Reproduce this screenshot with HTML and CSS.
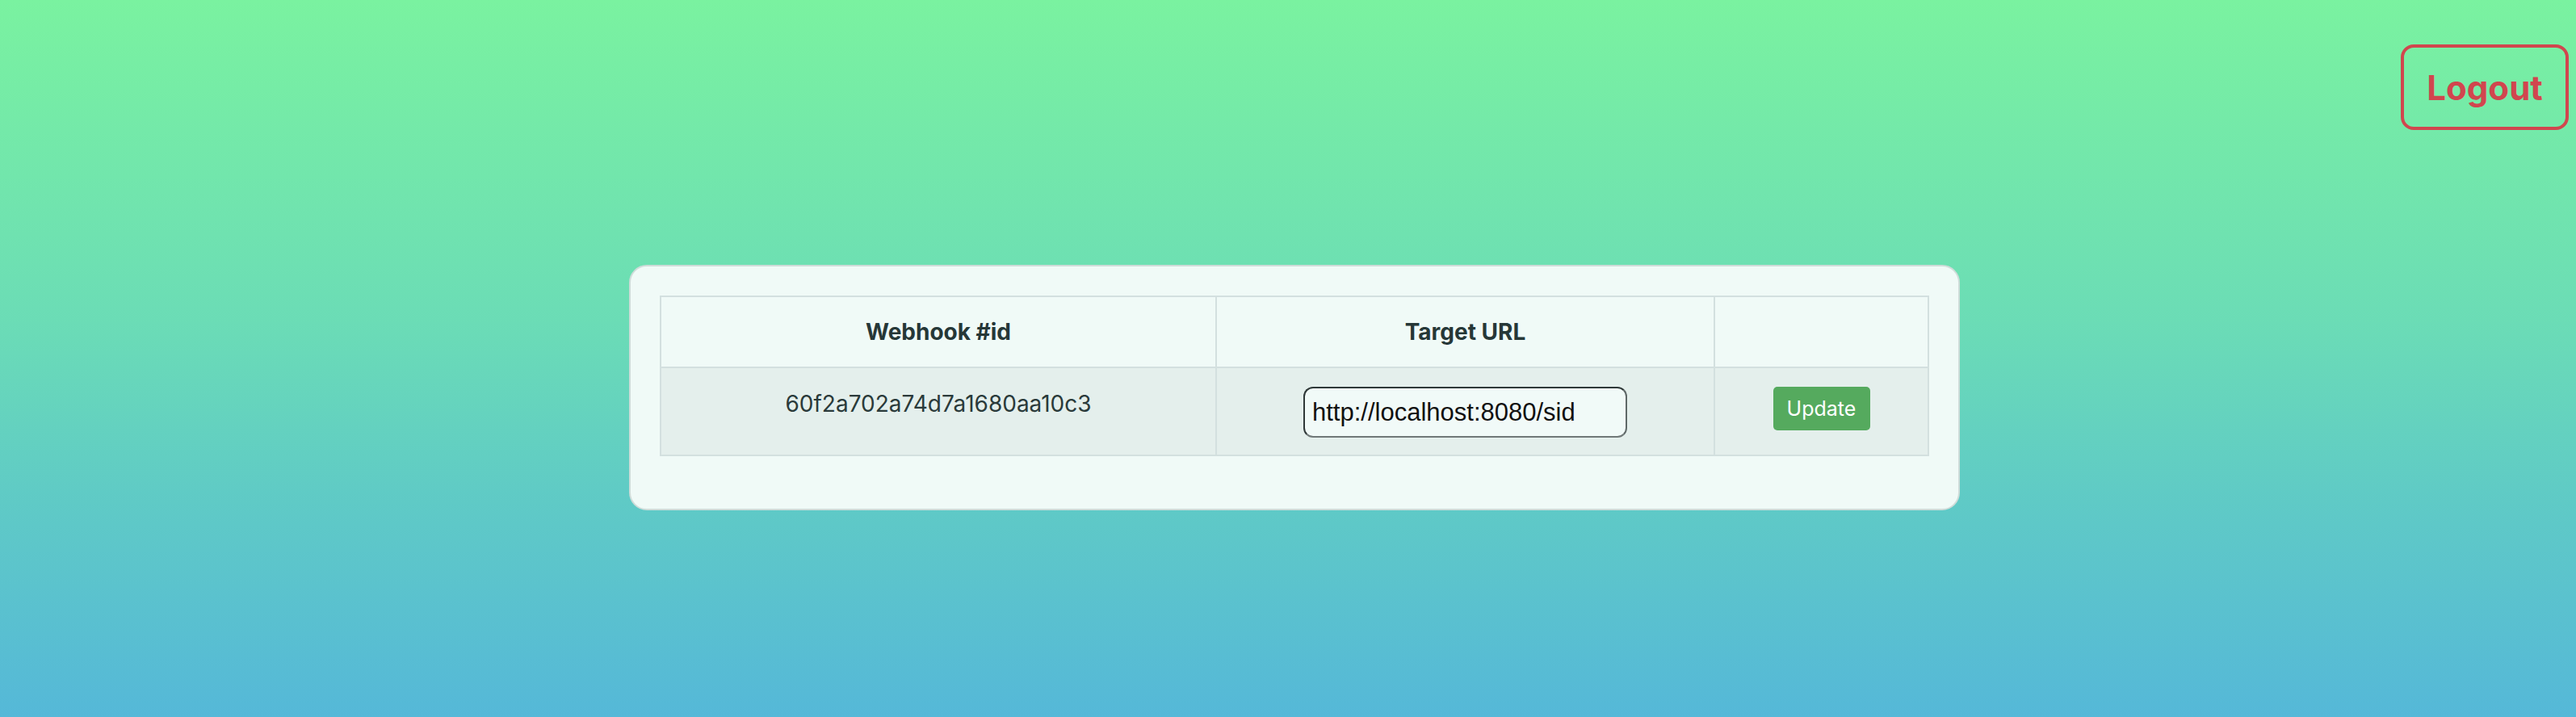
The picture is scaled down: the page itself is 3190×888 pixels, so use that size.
FILE: index.html
```html
<!DOCTYPE html>
<html lang="en">
<head>
<meta charset="utf-8">
<title>Webhooks</title>
<link rel="stylesheet" href="styles.css">
</head>
<body>
<button class="logout" type="button">Logout</button>
<main class="page">
  <section class="card">
    <table class="hooks">
      <thead>
        <tr>
          <th class="col-id">Webhook #id</th>
          <th class="col-url">Target URL</th>
          <th class="col-act"></th>
        </tr>
      </thead>
      <tbody>
        <tr>
          <td class="cell-id">60f2a702a74d7a1680aa10c3</td>
          <td><input class="url-input" type="text" value="http://localhost:8080/sid"></td>
          <td><button class="update" type="button">Update</button></td>
        </tr>
      </tbody>
    </table>
  </section>
</main>
</body>
</html>
```

FILE: styles.css
```css
html, body {
  margin: 0;
  padding: 0;
}

body {
  min-height: 888px;
  background: linear-gradient(180deg, #7af2a0 0%, #6bdcb6 45%, #5fcac6 70%, #55b8d8 100%);
  font-family: Inter, "Noto Sans", sans-serif;
  color: #263737;
  position: relative;
}

.logout {
  position: absolute;
  top: 55px;
  right: 9px;
  width: 208px;
  height: 106px;
  box-sizing: border-box;
  border: 4px solid #d1464e;
  border-radius: 16px;
  background: transparent;
  color: #d1464e;
  font-family: Inter, "Noto Sans", sans-serif;
  font-weight: 700;
  font-size: 42px;
  padding: 0;
  cursor: pointer;
}

.page {
  display: flex;
  justify-content: center;
  padding: 328px 0 0 16px;
}

.card {
  box-sizing: border-box;
  width: 1648px;
  background: #f0faf7;
  border: 2px solid #cfdcd9;
  border-radius: 22px;
  padding: 36px 36px 65px 36px;
}

.hooks {
  width: 100%;
  border-collapse: collapse;
  table-layout: fixed;
  font-size: 28px;
  line-height: 42px;
}

.hooks th,
.hooks td {
  border: 2px solid #d3e0df;
  text-align: center;
}

.hooks th {
  background: #f0faf7;
  font-weight: 700;
  padding: 22px 0;
  color: #263737;
}

.col-id { width: 686px; }
.col-url { width: 615px; }

.hooks td {
  background: #e4efec;
  vertical-align: top;
  padding: 23px 0 21px;
}

.cell-id {
  font-weight: 400;
  color: #2a3a3a;
}

.url-input {
  box-sizing: border-box;
  width: 401px;
  height: 63px;
  margin: 0;
  border: 2px solid #2f3838;
  border-right-color: #5f6868;
  border-bottom-color: #707878;
  border-radius: 12px;
  background: #f1faf8;
  padding: 0 9px;
  font-family: "Liberation Sans", Arial, sans-serif;
  font-size: 31px;
  color: #111;
  vertical-align: top;
}

.update {
  box-sizing: border-box;
  width: 120px;
  height: 54px;
  border: none;
  border-radius: 5px;
  background: #55aa5e;
  color: #ffffff;
  font-family: Inter, "Noto Sans", sans-serif;
  font-size: 25px;
  padding: 0;
  vertical-align: top;
  cursor: pointer;
}
```
